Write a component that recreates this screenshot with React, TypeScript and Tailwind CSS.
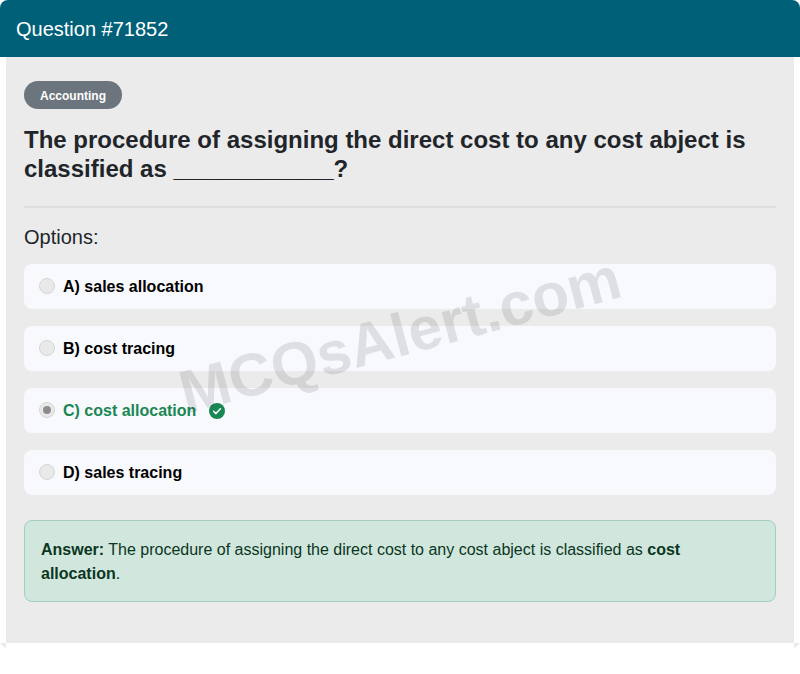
import React from 'react';

const options = [
  { id: 'a', label: 'A) sales allocation' },
  { id: 'b', label: 'B) cost tracing' },
  { id: 'c', label: 'C) cost allocation', correct: true },
  { id: 'd', label: 'D) sales tracing' },
];

function CheckBadge() {
  return (
    <svg width="16" height="16" viewBox="0 0 16 16" className="ml-[13px] shrink-0">
      <circle cx="8" cy="8" r="8" fill="#198754" />
      <path d="M4.6 8.3l2.3 2.3 4.5-4.8" fill="none" stroke="#fff" strokeWidth="1.5" strokeLinecap="round" strokeLinejoin="round" />
    </svg>
  );
}

export default function App() {
  return (
    <div className="min-h-[674px] bg-white font-['Liberation_Sans',Arial,sans-serif] text-[16px] text-[#212529]">
      <div className="flex h-[57px] items-center rounded-t-[8px] bg-[#006078] px-4 pt-px text-[20px] text-white">
        Question #71852
      </div>
      <div className="relative mx-[6px] h-[586px] overflow-hidden bg-[#ebebeb] px-[18px] pt-[24px]">
        <span className="inline-flex h-[28px] w-[98px] items-center justify-center rounded-full bg-[#6c757d] pt-[2px] text-[12px] font-bold text-white">
          Accounting
        </span>
        <h1 className="mt-[16px] text-[24px] leading-[29px] font-bold">
          The procedure of assigning the direct cost to any cost abject is classified as ____________?
        </h1>
        <div className="mt-[23px] h-[2px] bg-[#dedede]" />
        <h2 className="mt-[17px] text-[20px] leading-[24px]">Options:</h2>
        <div className="mt-[15px] flex flex-col gap-[17px]">
          {options.map((o) => (
            <div key={o.id} className="flex h-[45px] items-center rounded-[8px] bg-[#f8f9fd] pl-[15px]">
              <span className="mb-[1px] flex h-[16px] w-[16px] items-center justify-center rounded-full border border-[#d5d5d5] bg-[#e9e9e9]">
                {o.correct && <span className="h-[8px] w-[8px] rounded-full bg-[#8c8c8c]" />}
              </span>
              <span className={`ml-[8px] pt-px font-bold ${o.correct ? 'text-[#198754]' : 'text-black'}`}>{o.label}</span>
              {o.correct && <CheckBadge />}
            </div>
          ))}
        </div>
        <div className="mt-[25px] h-[82px] rounded-[8px] border border-[#a3cfbb] bg-[#d1e7dd] px-[16px] pt-[17px] leading-[24px] text-[#0a3622]">
          <b>Answer:</b> The procedure of assigning the direct cost to any cost abject is classified as <b>cost allocation</b>.
        </div>
        <div className="pointer-events-none absolute top-[278px] left-[394px] -translate-x-1/2 -translate-y-1/2 -rotate-[15deg] text-[60.5px] leading-none font-bold whitespace-nowrap text-black/10">
          MCQsAlert.com
        </div>
      </div>
      <div className="flex h-[6px] justify-between">
        <span className="h-[6px] w-[6px] bg-[#ebebeb] [clip-path:polygon(0_0,100%_0,100%_100%)]" />
        <span className="h-[6px] w-[6px] bg-[#ebebeb] [clip-path:polygon(0_0,100%_0,0_100%)]" />
      </div>
    </div>
  );
}
